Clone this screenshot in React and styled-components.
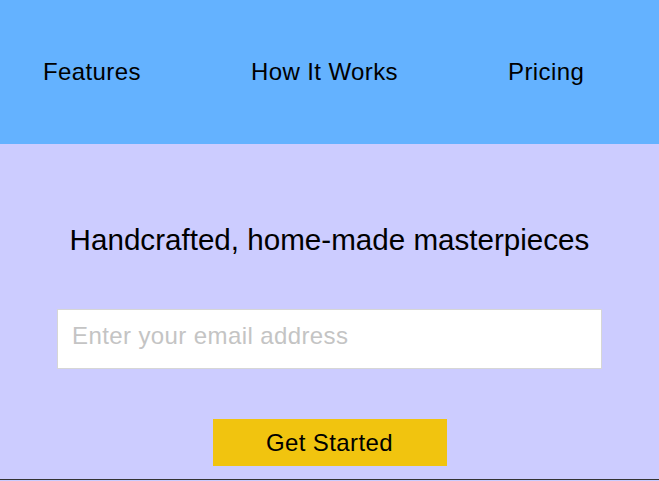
import React from 'react';
import styled, { createGlobalStyle } from 'styled-components';

const GlobalStyle = createGlobalStyle`
  html, body {
    margin: 0;
    padding: 0;
    background: #ccccff;
    font-family: "Liberation Sans", Arial, sans-serif;
  }
`

const Header = styled.header`
  height: 144px;
  background: #64b2ff;
  display: flex;
  align-items: center;
`
const NavList = styled.ul`
  list-style-type: none;
  margin: 0;
  padding: 0 0 0 43px;
  display: flex;
  gap: 110px;
`
const NavItem = styled.li`
  font-size: 24px;
  letter-spacing: 0.4px;
  color: #000;
`

const Hero = styled.main`
  height: 336px;
  box-sizing: border-box;
  padding-top: 79px;
  background: #ccccff;
  border-bottom: 1px solid #333;
  display: flex;
  flex-direction: column;
  align-items: center;
`
const Title = styled.h1`
  margin: 0;
  font-size: 29.6px;
  font-weight: normal;
  color: #000;
`
const EmailInput = styled.input`
  margin-top: 52px;
  width: 545px;
  height: 60px;
  box-sizing: border-box;
  padding: 0 14px 6px;
  border: 1px solid #d6d6d6;
  background: #fff;
  font-family: inherit;
  font-size: 24px;
  letter-spacing: 0.4px;
  outline: none;
  &::placeholder {
    color: #c4c4c4;
  }
`
const StartButton = styled.button`
  margin-top: 50px;
  width: 234px;
  height: 47px;
  border: none;
  background: #f1c40f;
  color: #000;
  font-family: inherit;
  font-size: 24px;
  letter-spacing: 0.4px;
  cursor: pointer;
`

const links = ['Features', 'How It Works', 'Pricing']

export default function App() {
  return (
    <>
      <GlobalStyle />
      <Header>
        <NavList>
          {links.map(link => (
            <NavItem key={link}>{link}</NavItem>
          ))}
        </NavList>
      </Header>
      <Hero>
        <Title>Handcrafted, home-made masterpieces</Title>
        <EmailInput type="email" placeholder="Enter your email address" />
        <StartButton>Get Started</StartButton>
      </Hero>
    </>
  )
}
